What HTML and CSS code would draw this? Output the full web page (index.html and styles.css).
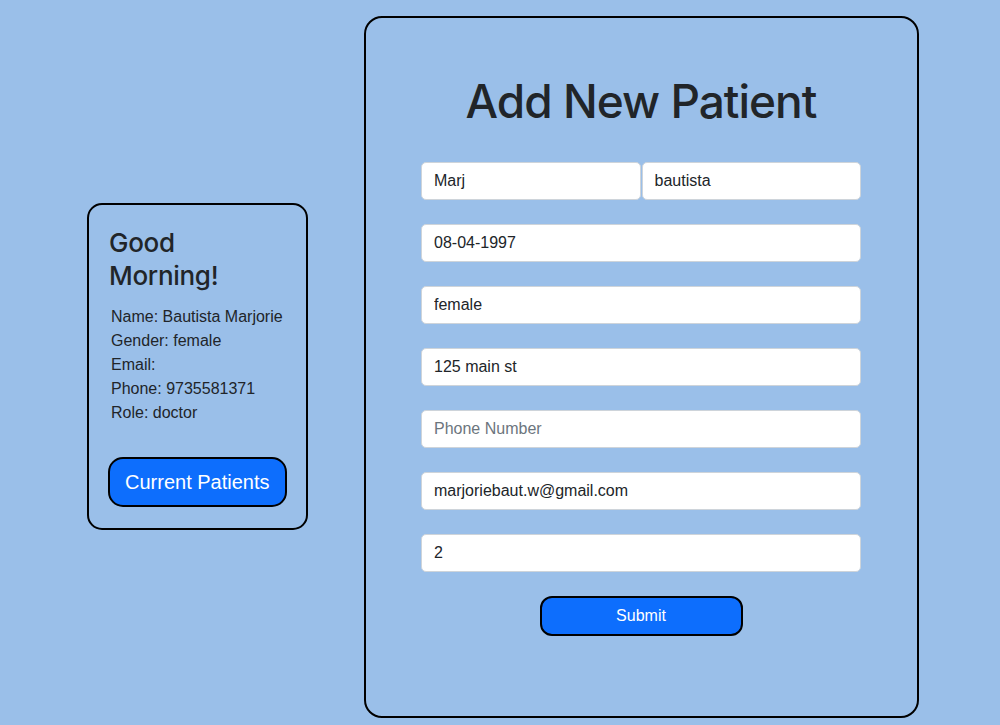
FILE: index.html
```html
<!DOCTYPE html>
<html lang="en">
<head>
<meta charset="utf-8">
<title>Add New Patient</title>
<link rel="stylesheet" href="styles.css">
</head>
<body>
<div class="page">
  <aside class="profile">
    <h3 class="greeting">Good Morning!</h3>
    <div class="info">
      <div>Name: Bautista Marjorie</div>
      <div>Gender: female</div>
      <div>Email:</div>
      <div>Phone: 9735581371</div>
      <div>Role: doctor</div>
    </div>
    <button class="btn-current" type="button">Current Patients</button>
  </aside>
  <main class="form-card">
    <h1 class="title">Add New Patient</h1>
    <form class="patient-form">
      <div class="name-row">
        <input class="field" type="text" value="Marj" placeholder="First Name">
        <input class="field" type="text" value="bautista" placeholder="Last Name">
      </div>
      <input class="field" type="text" value="08-04-1997" placeholder="Date of Birth">
      <input class="field" type="text" value="female" placeholder="Gender">
      <input class="field" type="text" value="125 main st" placeholder="Address">
      <input class="field" type="text" value="" placeholder="Phone Number">
      <input class="field" type="text" value="marjoriebaut.w@gmail.com" placeholder="Email">
      <input class="field" type="text" value="2" placeholder="Doctor ID">
      <button class="btn-submit" type="button">Submit</button>
    </form>
  </main>
</div>
</body>
</html>
```

FILE: styles.css
```css
* { box-sizing: border-box; }
html, body {
  margin: 0;
  padding: 0;
  background: #9abfe9;
  font-family: "Liberation Sans", Arial, sans-serif;
  color: #212529;
}
.page {
  height: 725px;
  display: flex;
  align-items: center;
  padding: 8px 0 0 87px;
  gap: 56px;
}
.profile {
  width: 221px;
  border: 2px solid #000;
  border-radius: 15px;
  padding: 21px 19px 21px 20px;
}
.greeting {
  margin: 0 0 13px 0;
  font-family: Inter, "Liberation Sans", sans-serif;
  font-size: 26px;
  line-height: 33px;
  font-weight: 500;
  letter-spacing: -0.3px;
}
.info {
  font-size: 16px;
  line-height: 24px;
  padding-left: 2px;
}
.btn-current {
  margin-top: 32px;
  margin-left: -1px;
  height: 50px;
  padding: 0 15px;
  background: #0d6efd;
  color: #fff;
  border: 2px solid #000;
  border-radius: 15px;
  font-family: inherit;
  font-size: 20px;
  white-space: nowrap;
}
.form-card {
  width: 555px;
  height: 702px;
  border: 2px solid #000;
  border-radius: 18px;
  padding: 55px 56px 0 55px;
}
.title {
  margin: 0 0 32px 0;
  text-align: center;
  font-family: Inter, "Liberation Sans", sans-serif;
  font-size: 46px;
  line-height: 57px;
  font-weight: 500;
  letter-spacing: -1px;
}
.patient-form {
  display: flex;
  flex-direction: column;
  align-items: center;
  gap: 24px;
}
.name-row {
  display: flex;
  width: 100%;
  gap: 1px;
}
.name-row .field { flex: 1; min-width: 0; }
.field {
  width: 100%;
  height: 38px;
  padding: 6px 12px;
  background: #fff;
  border: 1px solid #ced4da;
  border-radius: 5px;
  font-family: inherit;
  font-size: 16px;
  color: #212529;
}
.field::placeholder { color: #6c757d; }
.btn-submit {
  width: 203px;
  height: 40px;
  background: #0d6efd;
  color: #fff;
  border: 2px solid #000;
  border-radius: 12px;
  font-family: inherit;
  font-size: 16px;
}
```
